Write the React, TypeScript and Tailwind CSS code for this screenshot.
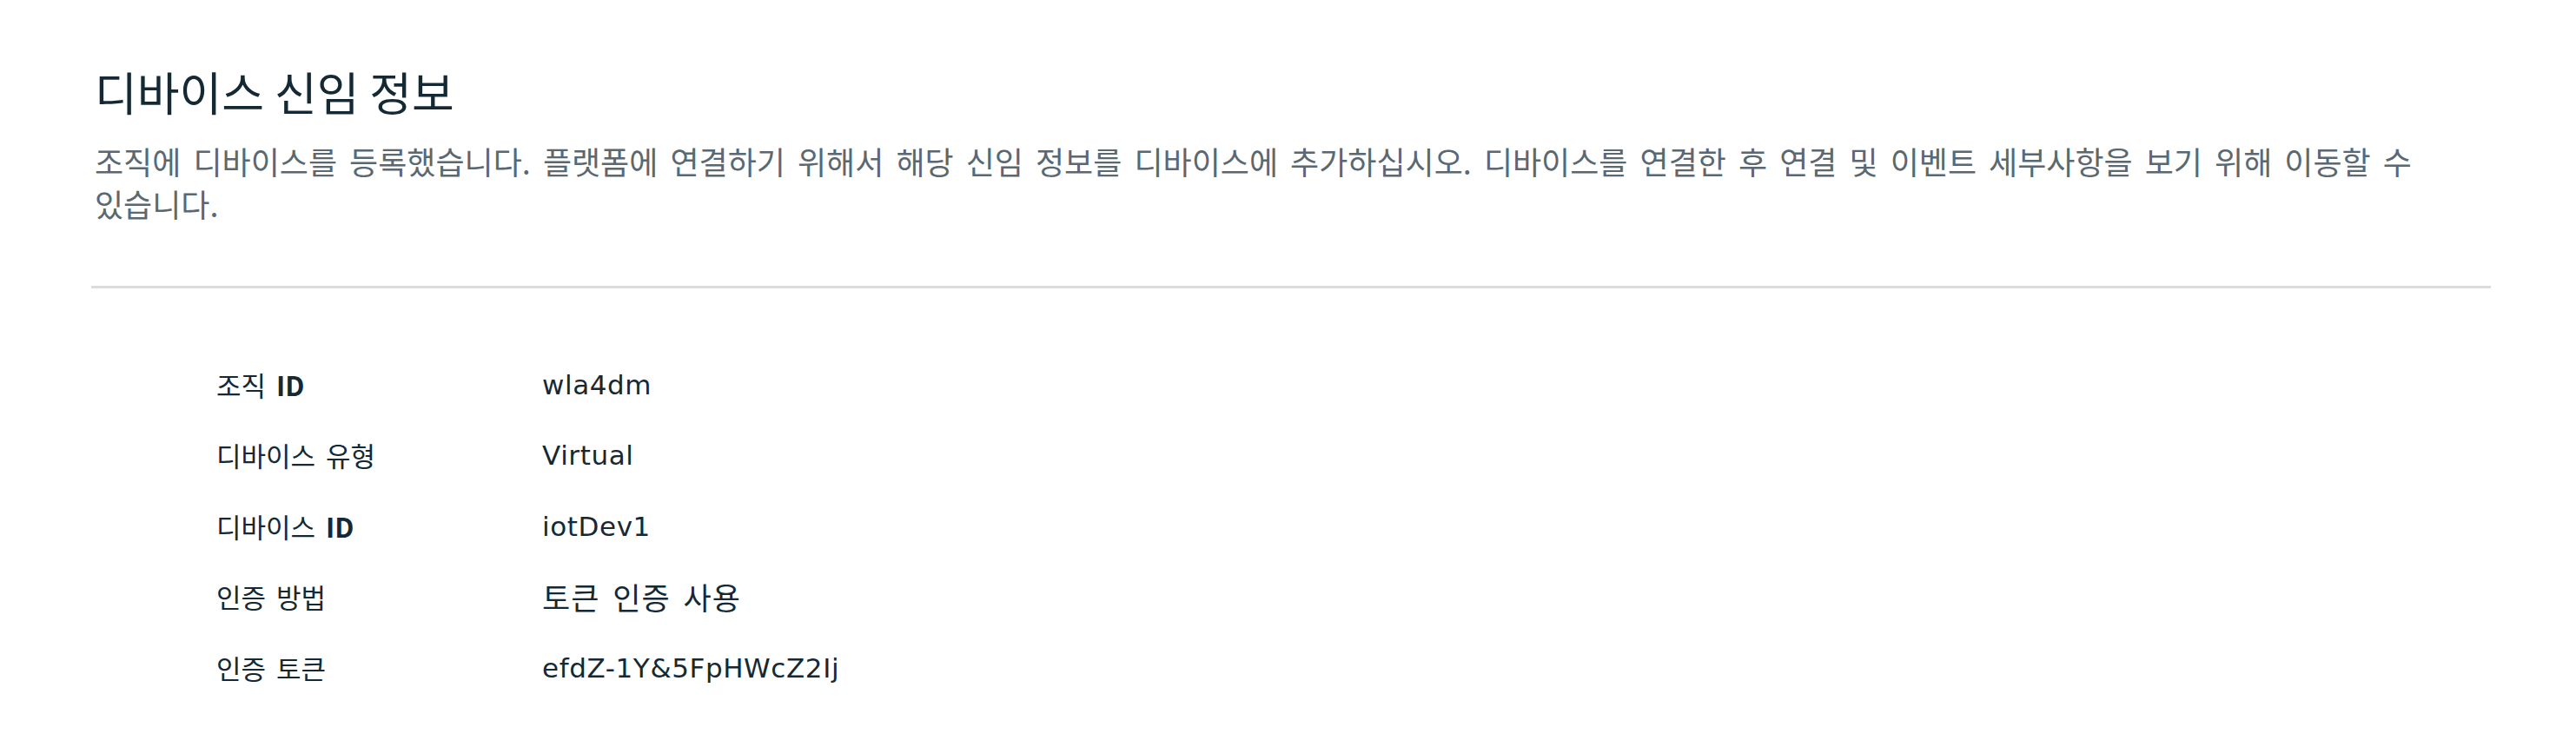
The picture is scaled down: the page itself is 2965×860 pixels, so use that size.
const KR = "font-['Noto_Sans_CJK_KR','Noto_Sans',sans-serif]";
const LATIN = "font-['DejaVu_Sans','Noto_Sans_CJK_KR',sans-serif]";

const rows: { label: React.ReactNode; value: React.ReactNode; kr?: boolean }[] = [
  { label: <>조직 <b className="font-semibold">ID</b></>, value: 'wla4dm' },
  { label: '디바이스 유형', value: 'Virtual' },
  { label: <>디바이스 <b className="font-semibold">ID</b></>, value: 'iotDev1' },
  { label: '인증 방법', value: '토큰 인증 사용', kr: true },
  { label: '인증 토큰', value: 'efdZ-1Y&5FpHWcZ2Ij' },
];

export default function App() {
  return (
    <main className={`min-h-[860px] w-full bg-white pl-[109px] pr-[98px] break-keep ${KR}`}>
      <h1 className="pt-[73px] text-[53px] leading-[64px] font-normal text-[#152935]">디바이스 신임 정보</h1>
      <p className="mt-[24px] text-[36px] leading-[49px] text-[#5a6872] [word-spacing:6px]">
        조직에 디바이스를 등록했습니다. 플랫폼에 연결하기 위해서 해당 신임 정보를 디바이스에 추가하십시오. 디바이스를 연결한 후 연결 및 이벤트 세부사항을 보기 위해 이동할 수 있습니다.
      </p>
      <div className="-ml-[4px] mt-[70px] h-[3px] bg-[#dcdcdc]" />

      {/* 세부 정보 */}
      <div className="mt-[70px] pl-[140px]">
        {rows.map((r, i) => (
          <div key={i} className="flex h-[81.5px] items-center">
            <div className="w-[375px] text-[31px] text-[#152935] [word-spacing:5px]">{r.label}</div>
            <div
              className={
                r.kr
                  ? 'text-[35px] tracking-[1px] text-[#152935] [word-spacing:6px]'
                  : `${LATIN} text-[31px] tracking-[0.6px] text-[#152935]`
              }
            >
              {r.value}
            </div>
          </div>
        ))}
      </div>
    </main>
  );
}
